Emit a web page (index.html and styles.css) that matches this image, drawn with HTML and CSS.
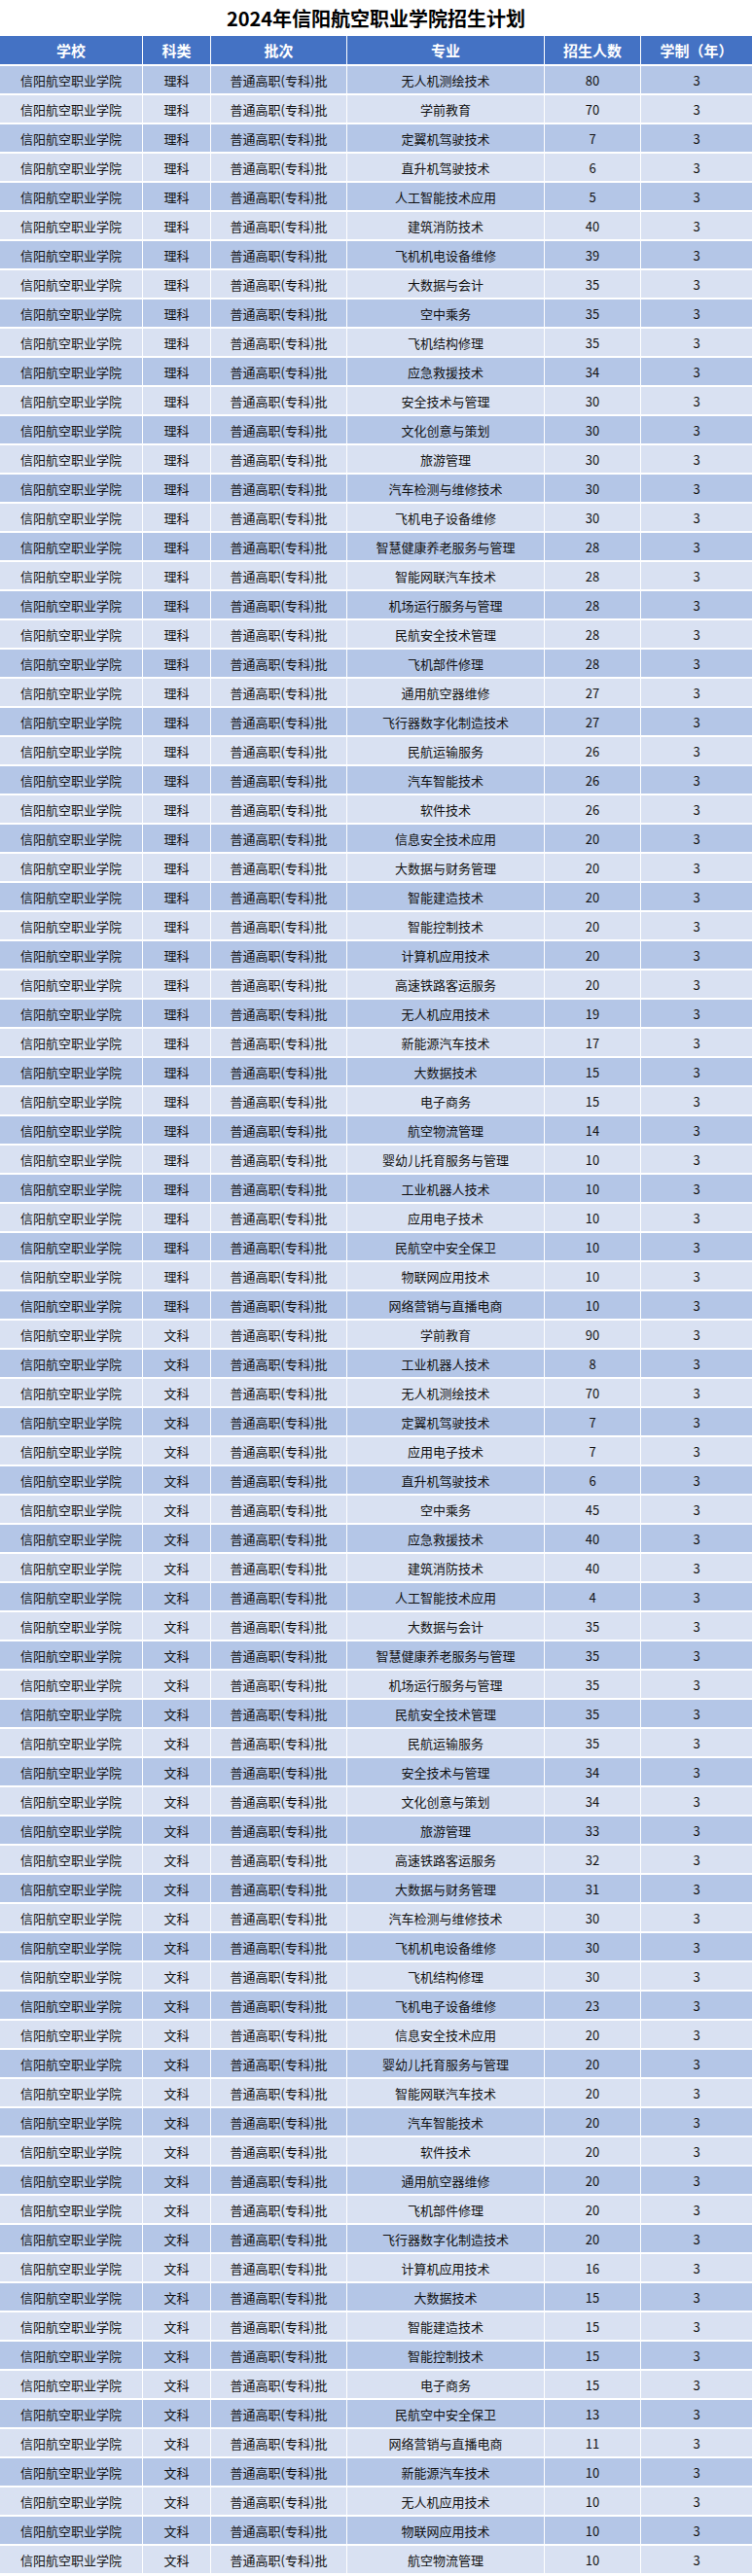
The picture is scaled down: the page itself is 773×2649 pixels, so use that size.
FILE: index.html
```html
<!DOCTYPE html>
<html lang="zh-CN">
<head>
<meta charset="utf-8">
<title>2024年信阳航空职业学院招生计划</title>
<link rel="stylesheet" href="styles.css">
</head>
<body>
<div class="sheet">
  <div class="title">2024年信阳航空职业学院招生计划</div>
  <div class="row head"><div>学校</div><div>科类</div><div>批次</div><div>专业</div><div>招生人数</div><div>学制（年）</div></div>
  <div class="body">
    <div class="row"><div>信阳航空职业学院</div><div>理科</div><div>普通高职(专科)批</div><div>无人机测绘技术</div><div>80</div><div>3</div></div>
    <div class="row"><div>信阳航空职业学院</div><div>理科</div><div>普通高职(专科)批</div><div>学前教育</div><div>70</div><div>3</div></div>
    <div class="row"><div>信阳航空职业学院</div><div>理科</div><div>普通高职(专科)批</div><div>定翼机驾驶技术</div><div>7</div><div>3</div></div>
    <div class="row"><div>信阳航空职业学院</div><div>理科</div><div>普通高职(专科)批</div><div>直升机驾驶技术</div><div>6</div><div>3</div></div>
    <div class="row"><div>信阳航空职业学院</div><div>理科</div><div>普通高职(专科)批</div><div>人工智能技术应用</div><div>5</div><div>3</div></div>
    <div class="row"><div>信阳航空职业学院</div><div>理科</div><div>普通高职(专科)批</div><div>建筑消防技术</div><div>40</div><div>3</div></div>
    <div class="row"><div>信阳航空职业学院</div><div>理科</div><div>普通高职(专科)批</div><div>飞机机电设备维修</div><div>39</div><div>3</div></div>
    <div class="row"><div>信阳航空职业学院</div><div>理科</div><div>普通高职(专科)批</div><div>大数据与会计</div><div>35</div><div>3</div></div>
    <div class="row"><div>信阳航空职业学院</div><div>理科</div><div>普通高职(专科)批</div><div>空中乘务</div><div>35</div><div>3</div></div>
    <div class="row"><div>信阳航空职业学院</div><div>理科</div><div>普通高职(专科)批</div><div>飞机结构修理</div><div>35</div><div>3</div></div>
    <div class="row"><div>信阳航空职业学院</div><div>理科</div><div>普通高职(专科)批</div><div>应急救援技术</div><div>34</div><div>3</div></div>
    <div class="row"><div>信阳航空职业学院</div><div>理科</div><div>普通高职(专科)批</div><div>安全技术与管理</div><div>30</div><div>3</div></div>
    <div class="row"><div>信阳航空职业学院</div><div>理科</div><div>普通高职(专科)批</div><div>文化创意与策划</div><div>30</div><div>3</div></div>
    <div class="row"><div>信阳航空职业学院</div><div>理科</div><div>普通高职(专科)批</div><div>旅游管理</div><div>30</div><div>3</div></div>
    <div class="row"><div>信阳航空职业学院</div><div>理科</div><div>普通高职(专科)批</div><div>汽车检测与维修技术</div><div>30</div><div>3</div></div>
    <div class="row"><div>信阳航空职业学院</div><div>理科</div><div>普通高职(专科)批</div><div>飞机电子设备维修</div><div>30</div><div>3</div></div>
    <div class="row"><div>信阳航空职业学院</div><div>理科</div><div>普通高职(专科)批</div><div>智慧健康养老服务与管理</div><div>28</div><div>3</div></div>
    <div class="row"><div>信阳航空职业学院</div><div>理科</div><div>普通高职(专科)批</div><div>智能网联汽车技术</div><div>28</div><div>3</div></div>
    <div class="row"><div>信阳航空职业学院</div><div>理科</div><div>普通高职(专科)批</div><div>机场运行服务与管理</div><div>28</div><div>3</div></div>
    <div class="row"><div>信阳航空职业学院</div><div>理科</div><div>普通高职(专科)批</div><div>民航安全技术管理</div><div>28</div><div>3</div></div>
    <div class="row"><div>信阳航空职业学院</div><div>理科</div><div>普通高职(专科)批</div><div>飞机部件修理</div><div>28</div><div>3</div></div>
    <div class="row"><div>信阳航空职业学院</div><div>理科</div><div>普通高职(专科)批</div><div>通用航空器维修</div><div>27</div><div>3</div></div>
    <div class="row"><div>信阳航空职业学院</div><div>理科</div><div>普通高职(专科)批</div><div>飞行器数字化制造技术</div><div>27</div><div>3</div></div>
    <div class="row"><div>信阳航空职业学院</div><div>理科</div><div>普通高职(专科)批</div><div>民航运输服务</div><div>26</div><div>3</div></div>
    <div class="row"><div>信阳航空职业学院</div><div>理科</div><div>普通高职(专科)批</div><div>汽车智能技术</div><div>26</div><div>3</div></div>
    <div class="row"><div>信阳航空职业学院</div><div>理科</div><div>普通高职(专科)批</div><div>软件技术</div><div>26</div><div>3</div></div>
    <div class="row"><div>信阳航空职业学院</div><div>理科</div><div>普通高职(专科)批</div><div>信息安全技术应用</div><div>20</div><div>3</div></div>
    <div class="row"><div>信阳航空职业学院</div><div>理科</div><div>普通高职(专科)批</div><div>大数据与财务管理</div><div>20</div><div>3</div></div>
    <div class="row"><div>信阳航空职业学院</div><div>理科</div><div>普通高职(专科)批</div><div>智能建造技术</div><div>20</div><div>3</div></div>
    <div class="row"><div>信阳航空职业学院</div><div>理科</div><div>普通高职(专科)批</div><div>智能控制技术</div><div>20</div><div>3</div></div>
    <div class="row"><div>信阳航空职业学院</div><div>理科</div><div>普通高职(专科)批</div><div>计算机应用技术</div><div>20</div><div>3</div></div>
    <div class="row"><div>信阳航空职业学院</div><div>理科</div><div>普通高职(专科)批</div><div>高速铁路客运服务</div><div>20</div><div>3</div></div>
    <div class="row"><div>信阳航空职业学院</div><div>理科</div><div>普通高职(专科)批</div><div>无人机应用技术</div><div>19</div><div>3</div></div>
    <div class="row"><div>信阳航空职业学院</div><div>理科</div><div>普通高职(专科)批</div><div>新能源汽车技术</div><div>17</div><div>3</div></div>
    <div class="row"><div>信阳航空职业学院</div><div>理科</div><div>普通高职(专科)批</div><div>大数据技术</div><div>15</div><div>3</div></div>
    <div class="row"><div>信阳航空职业学院</div><div>理科</div><div>普通高职(专科)批</div><div>电子商务</div><div>15</div><div>3</div></div>
    <div class="row"><div>信阳航空职业学院</div><div>理科</div><div>普通高职(专科)批</div><div>航空物流管理</div><div>14</div><div>3</div></div>
    <div class="row"><div>信阳航空职业学院</div><div>理科</div><div>普通高职(专科)批</div><div>婴幼儿托育服务与管理</div><div>10</div><div>3</div></div>
    <div class="row"><div>信阳航空职业学院</div><div>理科</div><div>普通高职(专科)批</div><div>工业机器人技术</div><div>10</div><div>3</div></div>
    <div class="row"><div>信阳航空职业学院</div><div>理科</div><div>普通高职(专科)批</div><div>应用电子技术</div><div>10</div><div>3</div></div>
    <div class="row"><div>信阳航空职业学院</div><div>理科</div><div>普通高职(专科)批</div><div>民航空中安全保卫</div><div>10</div><div>3</div></div>
    <div class="row"><div>信阳航空职业学院</div><div>理科</div><div>普通高职(专科)批</div><div>物联网应用技术</div><div>10</div><div>3</div></div>
    <div class="row"><div>信阳航空职业学院</div><div>理科</div><div>普通高职(专科)批</div><div>网络营销与直播电商</div><div>10</div><div>3</div></div>
    <div class="row"><div>信阳航空职业学院</div><div>文科</div><div>普通高职(专科)批</div><div>学前教育</div><div>90</div><div>3</div></div>
    <div class="row"><div>信阳航空职业学院</div><div>文科</div><div>普通高职(专科)批</div><div>工业机器人技术</div><div>8</div><div>3</div></div>
    <div class="row"><div>信阳航空职业学院</div><div>文科</div><div>普通高职(专科)批</div><div>无人机测绘技术</div><div>70</div><div>3</div></div>
    <div class="row"><div>信阳航空职业学院</div><div>文科</div><div>普通高职(专科)批</div><div>定翼机驾驶技术</div><div>7</div><div>3</div></div>
    <div class="row"><div>信阳航空职业学院</div><div>文科</div><div>普通高职(专科)批</div><div>应用电子技术</div><div>7</div><div>3</div></div>
    <div class="row"><div>信阳航空职业学院</div><div>文科</div><div>普通高职(专科)批</div><div>直升机驾驶技术</div><div>6</div><div>3</div></div>
    <div class="row"><div>信阳航空职业学院</div><div>文科</div><div>普通高职(专科)批</div><div>空中乘务</div><div>45</div><div>3</div></div>
    <div class="row"><div>信阳航空职业学院</div><div>文科</div><div>普通高职(专科)批</div><div>应急救援技术</div><div>40</div><div>3</div></div>
    <div class="row"><div>信阳航空职业学院</div><div>文科</div><div>普通高职(专科)批</div><div>建筑消防技术</div><div>40</div><div>3</div></div>
    <div class="row"><div>信阳航空职业学院</div><div>文科</div><div>普通高职(专科)批</div><div>人工智能技术应用</div><div>4</div><div>3</div></div>
    <div class="row"><div>信阳航空职业学院</div><div>文科</div><div>普通高职(专科)批</div><div>大数据与会计</div><div>35</div><div>3</div></div>
    <div class="row"><div>信阳航空职业学院</div><div>文科</div><div>普通高职(专科)批</div><div>智慧健康养老服务与管理</div><div>35</div><div>3</div></div>
    <div class="row"><div>信阳航空职业学院</div><div>文科</div><div>普通高职(专科)批</div><div>机场运行服务与管理</div><div>35</div><div>3</div></div>
    <div class="row"><div>信阳航空职业学院</div><div>文科</div><div>普通高职(专科)批</div><div>民航安全技术管理</div><div>35</div><div>3</div></div>
    <div class="row"><div>信阳航空职业学院</div><div>文科</div><div>普通高职(专科)批</div><div>民航运输服务</div><div>35</div><div>3</div></div>
    <div class="row"><div>信阳航空职业学院</div><div>文科</div><div>普通高职(专科)批</div><div>安全技术与管理</div><div>34</div><div>3</div></div>
    <div class="row"><div>信阳航空职业学院</div><div>文科</div><div>普通高职(专科)批</div><div>文化创意与策划</div><div>34</div><div>3</div></div>
    <div class="row"><div>信阳航空职业学院</div><div>文科</div><div>普通高职(专科)批</div><div>旅游管理</div><div>33</div><div>3</div></div>
    <div class="row"><div>信阳航空职业学院</div><div>文科</div><div>普通高职(专科)批</div><div>高速铁路客运服务</div><div>32</div><div>3</div></div>
    <div class="row"><div>信阳航空职业学院</div><div>文科</div><div>普通高职(专科)批</div><div>大数据与财务管理</div><div>31</div><div>3</div></div>
    <div class="row"><div>信阳航空职业学院</div><div>文科</div><div>普通高职(专科)批</div><div>汽车检测与维修技术</div><div>30</div><div>3</div></div>
    <div class="row"><div>信阳航空职业学院</div><div>文科</div><div>普通高职(专科)批</div><div>飞机机电设备维修</div><div>30</div><div>3</div></div>
    <div class="row"><div>信阳航空职业学院</div><div>文科</div><div>普通高职(专科)批</div><div>飞机结构修理</div><div>30</div><div>3</div></div>
    <div class="row"><div>信阳航空职业学院</div><div>文科</div><div>普通高职(专科)批</div><div>飞机电子设备维修</div><div>23</div><div>3</div></div>
    <div class="row"><div>信阳航空职业学院</div><div>文科</div><div>普通高职(专科)批</div><div>信息安全技术应用</div><div>20</div><div>3</div></div>
    <div class="row"><div>信阳航空职业学院</div><div>文科</div><div>普通高职(专科)批</div><div>婴幼儿托育服务与管理</div><div>20</div><div>3</div></div>
    <div class="row"><div>信阳航空职业学院</div><div>文科</div><div>普通高职(专科)批</div><div>智能网联汽车技术</div><div>20</div><div>3</div></div>
    <div class="row"><div>信阳航空职业学院</div><div>文科</div><div>普通高职(专科)批</div><div>汽车智能技术</div><div>20</div><div>3</div></div>
    <div class="row"><div>信阳航空职业学院</div><div>文科</div><div>普通高职(专科)批</div><div>软件技术</div><div>20</div><div>3</div></div>
    <div class="row"><div>信阳航空职业学院</div><div>文科</div><div>普通高职(专科)批</div><div>通用航空器维修</div><div>20</div><div>3</div></div>
    <div class="row"><div>信阳航空职业学院</div><div>文科</div><div>普通高职(专科)批</div><div>飞机部件修理</div><div>20</div><div>3</div></div>
    <div class="row"><div>信阳航空职业学院</div><div>文科</div><div>普通高职(专科)批</div><div>飞行器数字化制造技术</div><div>20</div><div>3</div></div>
    <div class="row"><div>信阳航空职业学院</div><div>文科</div><div>普通高职(专科)批</div><div>计算机应用技术</div><div>16</div><div>3</div></div>
    <div class="row"><div>信阳航空职业学院</div><div>文科</div><div>普通高职(专科)批</div><div>大数据技术</div><div>15</div><div>3</div></div>
    <div class="row"><div>信阳航空职业学院</div><div>文科</div><div>普通高职(专科)批</div><div>智能建造技术</div><div>15</div><div>3</div></div>
    <div class="row"><div>信阳航空职业学院</div><div>文科</div><div>普通高职(专科)批</div><div>智能控制技术</div><div>15</div><div>3</div></div>
    <div class="row"><div>信阳航空职业学院</div><div>文科</div><div>普通高职(专科)批</div><div>电子商务</div><div>15</div><div>3</div></div>
    <div class="row"><div>信阳航空职业学院</div><div>文科</div><div>普通高职(专科)批</div><div>民航空中安全保卫</div><div>13</div><div>3</div></div>
    <div class="row"><div>信阳航空职业学院</div><div>文科</div><div>普通高职(专科)批</div><div>网络营销与直播电商</div><div>11</div><div>3</div></div>
    <div class="row"><div>信阳航空职业学院</div><div>文科</div><div>普通高职(专科)批</div><div>新能源汽车技术</div><div>10</div><div>3</div></div>
    <div class="row"><div>信阳航空职业学院</div><div>文科</div><div>普通高职(专科)批</div><div>无人机应用技术</div><div>10</div><div>3</div></div>
    <div class="row"><div>信阳航空职业学院</div><div>文科</div><div>普通高职(专科)批</div><div>物联网应用技术</div><div>10</div><div>3</div></div>
    <div class="row"><div>信阳航空职业学院</div><div>文科</div><div>普通高职(专科)批</div><div>航空物流管理</div><div>10</div><div>3</div></div>
  </div>
</div>
</body>
</html>
```

FILE: styles.css
```css
html, body {
  margin: 0;
  padding: 0;
  background: #ffffff;
}

.sheet {
  width: 773px;
  font-family: "Noto Sans CJK SC", "Noto Sans", sans-serif;
  color: #111111;
}

.title {
  height: 37px;
  display: flex;
  align-items: center;
  justify-content: center;
  font-size: 20px;
  font-weight: 700;
  color: #000000;
  background: #ffffff;
}

.row {
  display: grid;
  grid-template-columns: 146px 69px 139px 202px 98px 114px;
  column-gap: 1px;
  height: 28px;
  margin-bottom: 2px;
  background: #ffffff;
}

.row > div {
  display: flex;
  align-items: center;
  justify-content: center;
  font-size: 13px;
  white-space: nowrap;
  background: #d9e1f2;
}

.head {
  height: 29px;
}

.head > div {
  background: #4472c4;
  color: #ffffff;
  font-size: 15px;
  font-weight: 700;
}

.body .row:nth-child(odd) > div {
  background: #b4c6e7;
}

.body .row:nth-child(even) > div {
  background: #d9e1f2;
}
```
